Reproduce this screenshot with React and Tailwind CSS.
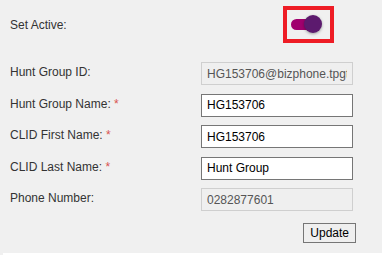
import React, { useState } from "react";

const Row = ({ label, required, value, disabled }) => (
  <div className="flex items-start h-[23px]">
    <label className="w-[191px] text-[12px] text-[#333] pt-[1px]">
      {label}
      {required && <span className="text-[#d9534f]"> *</span>}
    </label>
    <input
      readOnly
      value={value}
      disabled={disabled}
      className={`w-[152px] h-[23px] px-[5px] text-[12px] outline-none ${
        disabled
          ? "bg-[#efefef] border border-[#cfcfcf] text-[#555]"
          : "bg-white border border-[#767676] text-black"
      }`}
    />
  </div>
);

export default function App() {
  const [active, setActive] = useState(true);

  return (
    <div
      className="w-[382px] h-[255px] bg-[#f0f0f0] flex flex-col"
      style={{ fontFamily: '"Liberation Sans", Arial, sans-serif' }}
    >
      <div className="pl-[10px] pt-[6px] flex flex-col">
        {/* Set Active */}
        <div className="flex items-center h-[37px]">
          <span className="w-[273px] text-[12px] text-[#333]">Set Active:</span>
          <button
            onClick={() => setActive(!active)}
            className="w-[51px] h-[37px] border-[4px] border-[#ee1c25] flex items-center pl-[4px]"
          >
            <span className="relative w-[30px] h-[11px] rounded-full bg-[#a0006e] block">
              <span className="absolute right-[-1px] top-[-4px] w-[18px] h-[18px] rounded-full bg-[#5c1a6e] shadow-[0_1px_3px_rgba(0,0,0,0.35)]" />
            </span>
          </button>
        </div>

        <div className="flex flex-col gap-[8.5px] mt-[19px]">
          <Row label="Hunt Group ID:" value="HG153706@bizphone.tpgtelecom.com.au" disabled />
          <Row label="Hunt Group Name:" required value="HG153706" />
          <Row label="CLID First Name:" required value="HG153706" />
          <Row label="CLID Last Name:" required value="Hunt Group" />
          <Row label="Phone Number:" value="0282877601" disabled />
        </div>

        <div className="flex justify-end pr-[26px] mt-[12px]">
          <button className="h-[20px] px-[6px] text-[12px] text-black bg-[#efefef] border border-[#767676]">
            Update
          </button>
        </div>
      </div>
      <div className="mt-auto ml-[3px] h-[2px] bg-white" />
    </div>
  );
}
